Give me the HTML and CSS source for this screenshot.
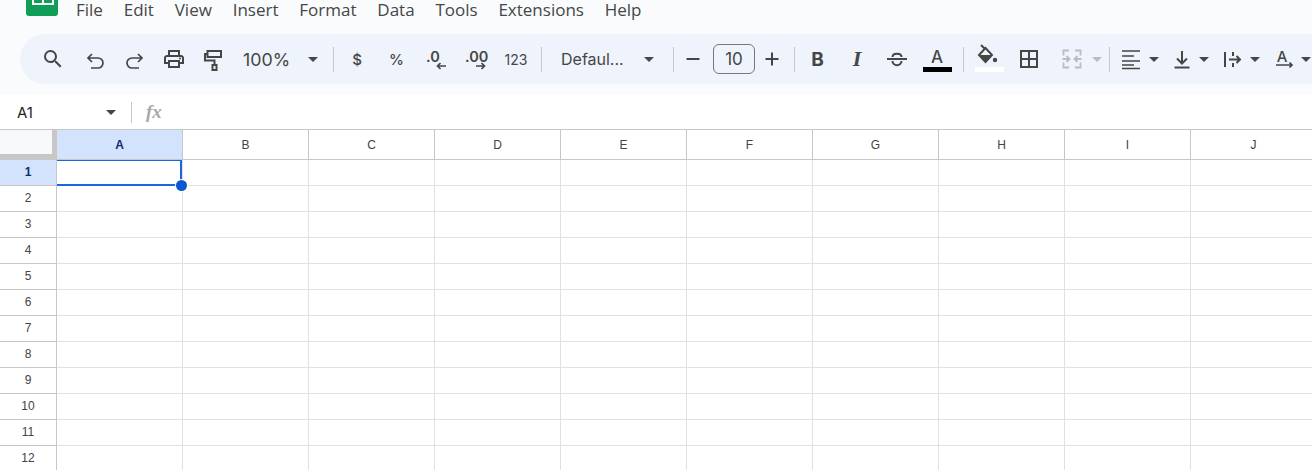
FILE: index.html
```html
<!DOCTYPE html>
<html lang="en">
<head>
<meta charset="utf-8">
<title>Sheet</title>
<link rel="stylesheet" href="styles.css">
</head>
<body>
<div class="top">
  <svg class="logo" width="32" height="16" viewBox="0 0 32 16"><path d="M0 0h32v13a3 3 0 0 1-3 3H3a3 3 0 0 1-3-3z" fill="#0f9d58"/><path d="M6 0h22v5H6z" fill="#fff"/><path d="M8 0h8v3H8zM18 0h8v3h-8z" fill="#0f9d58"/></svg>
  <nav class="menu"><span>File</span><span>Edit</span><span>View</span><span>Insert</span><span>Format</span><span>Data</span><span>Tools</span><span>Extensions</span><span>Help</span></nav>
</div>
<div class="toolbar">
  <button class="btn w-search"><svg width="24" height="24" viewBox="0 0 24 24"><path class="f" d="M15.5 14h-.79l-.28-.27A6.471 6.471 0 0 0 16 9.5 6.5 6.5 0 1 0 9.5 16c1.61 0 3.09-.59 4.23-1.57l.27.28v.79l5 4.99L20.49 19l-4.99-5zm-6 0C7.01 14 5 11.99 5 9.5S7.01 5 9.5 5 14 7.01 14 9.5 11.99 14 9.5 14z"/></svg></button>
  <button class="btn w-undo"><svg width="24" height="24" viewBox="0 0 24 24"><path class="s thin" d="M9 7l-4 4 4 4M5 11h10a5 5 0 0 1 0 10H8"/></svg></button>
  <button class="btn w-redo"><svg width="24" height="24" viewBox="0 0 24 24"><path class="s thin" d="M15 7l4 4-4 4M19 11H9a5 5 0 0 0 0 10h7"/></svg></button>
  <button class="btn w-print"><svg width="24" height="24" viewBox="0 0 24 24"><path class="f" d="M19 8h-1V3H6v5H5c-1.660 0-3 1.340-3 3v6h4v4h12v-4h4v-6c0-1.660-1.340-3-3-3zM8 5h8v3H8V5zm8 12v2H8v-4h8v2zm2-2v-2H6v2H4v-4c0-.55.45-1 1-1h14c.55 0 1 .45 1 1v4h-2z"/><circle class="f" cx="18" cy="11.500" r="1"/></svg></button>
  <button class="btn w-paint"><svg width="24" height="24" viewBox="0 0 24 24"><path class="s" d="M7.500 4h13.500v6H7.500zM7.500 7H5v6.500h9.500V18M12.500 18h4v5h-4z"/></svg></button>
  <span class="txt zoom">100%</span>
  <span class="caret c-zoom"></span>
  <i class="sep s-zoom"></i>
  <span class="txt sym dollar">$</span>
  <span class="txt sym pct">%</span>
  <span class="dec d0"><b>.0</b><svg width="10" height="8" viewBox="0 0 10 8"><path class="s thin" d="M10 4H1.500M4.500 1 1.500 4l3 3"/></svg></span>
  <span class="dec d00"><b>.00</b><svg width="10" height="8" viewBox="0 0 10 8"><path class="s thin" d="M0 4h8.500M5.500 1l3 3-3 3"/></svg></span>
  <span class="txt num">123</span>
  <i class="sep s-num"></i>
  <span class="txt font">Defaul...</span>
  <span class="caret c-font"></span>
  <i class="sep s-font"></i>
  <button class="btn w-minus"><svg width="24" height="24" viewBox="0 0 24 24"><path class="s" d="M5.500 12h13"/></svg></button>
  <span class="size">10</span>
  <button class="btn w-plus"><svg width="24" height="24" viewBox="0 0 24 24"><path class="s" d="M5.500 12h13M12 5.500v13"/></svg></button>
  <i class="sep s-plus"></i>
  <span class="fmt bold">B</span>
  <span class="fmt ital">I</span>
  <button class="btn w-strike"><svg width="24" height="24" viewBox="0 0 24 24"><path class="s" d="M2 12h20M7.500 10c0-4.500 9-4.500 9 0M7.500 14c0 5.500 9 5.500 9 0"/></svg></button>
  <span class="color-a"><span>A</span><i></i></span>
  <i class="sep s-color"></i>
  <span class="fill"><svg width="24" height="20" viewBox="0 0 24 20"><path class="s" d="M4 1l4.500 4.500M8.500 4 15 11 8.500 18 2 11z"/><path class="f" d="M2 11h13l-6.500 7z"/><circle class="f" cx="18" cy="16" r="2.200"/></svg><i></i></span>
  <button class="btn w-border"><svg width="24" height="24" viewBox="0 0 24 24"><path class="f" d="M3 3v18h18V3H3zm8 16H5v-6h6v6zm0-8H5V5h6v6zm8 8h-6v-6h6v6zm0-8h-6V5h6v6z"/></svg></button>
  <button class="btn w-merge"><svg width="24" height="24" viewBox="0 0 24 24"><path class="s dim" d="M9 3.500H3.500v5M3.500 11v2M3.500 15.500v5H9M15 3.500h5.500v5M20.500 11v2M20.500 15.500v5H15M2.500 12H9M6.500 9 9.500 12l-3 3M21.500 12H15M17.500 9l-3 3 3 3"/></svg></button>
  <span class="caret dimc c-merge"></span>
  <i class="sep s-merge"></i>
  <button class="btn w-align"><svg width="24" height="24" viewBox="0 0 24 24"><path class="s lines" d="M3 4h18M3 9h12M3 14h18M3 18h12M3 21.500h18"/></svg></button>
  <span class="caret c-align"></span>
  <button class="btn w-valign"><svg width="24" height="24" viewBox="0 0 24 24"><path class="s" d="M4.500 20.500h15M12 4v12M7 11.500l5 5 5-5"/></svg></button>
  <span class="caret c-valign"></span>
  <button class="btn w-wrap"><svg width="24" height="24" viewBox="0 0 24 24"><path class="s" d="M5 5v15M9 12.500h11M16.500 9l3.500 3.500-3.500 3.500M13 5v4M13 16v4"/></svg></button>
  <span class="caret c-wrap"></span>
  <button class="btn w-rot"><svg width="24" height="24" viewBox="0 0 24 24"><text class="rot-a" x="10" y="15" text-anchor="middle">A</text><path class="s thin" d="M4 18h16M17.500 15.500l2.500 2.500-2.500 2.500"/></svg></button>
  <span class="caret c-rot"></span>
</div>
<div class="formula">
  <span class="name">A1</span>
  <span class="caret c-name"></span>
  <i class="sep s-name"></i>
  <span class="fx">fx</span>
</div>
<div class="sheet">
  <div class="row head">
    <div class="corner"></div>
    <div class="col sel">A</div><div class="col">B</div><div class="col">C</div><div class="col">D</div><div class="col">E</div><div class="col">F</div><div class="col">G</div><div class="col">H</div><div class="col">I</div><div class="col">J</div>
  </div>
  <div class="row"><div class="rh sel">1</div><div class="c"></div><div class="c"></div><div class="c"></div><div class="c"></div><div class="c"></div><div class="c"></div><div class="c"></div><div class="c"></div><div class="c"></div><div class="c"></div></div>
  <div class="row"><div class="rh">2</div><div class="c"></div><div class="c"></div><div class="c"></div><div class="c"></div><div class="c"></div><div class="c"></div><div class="c"></div><div class="c"></div><div class="c"></div><div class="c"></div></div>
  <div class="row"><div class="rh">3</div><div class="c"></div><div class="c"></div><div class="c"></div><div class="c"></div><div class="c"></div><div class="c"></div><div class="c"></div><div class="c"></div><div class="c"></div><div class="c"></div></div>
  <div class="row"><div class="rh">4</div><div class="c"></div><div class="c"></div><div class="c"></div><div class="c"></div><div class="c"></div><div class="c"></div><div class="c"></div><div class="c"></div><div class="c"></div><div class="c"></div></div>
  <div class="row"><div class="rh">5</div><div class="c"></div><div class="c"></div><div class="c"></div><div class="c"></div><div class="c"></div><div class="c"></div><div class="c"></div><div class="c"></div><div class="c"></div><div class="c"></div></div>
  <div class="row"><div class="rh">6</div><div class="c"></div><div class="c"></div><div class="c"></div><div class="c"></div><div class="c"></div><div class="c"></div><div class="c"></div><div class="c"></div><div class="c"></div><div class="c"></div></div>
  <div class="row"><div class="rh">7</div><div class="c"></div><div class="c"></div><div class="c"></div><div class="c"></div><div class="c"></div><div class="c"></div><div class="c"></div><div class="c"></div><div class="c"></div><div class="c"></div></div>
  <div class="row"><div class="rh">8</div><div class="c"></div><div class="c"></div><div class="c"></div><div class="c"></div><div class="c"></div><div class="c"></div><div class="c"></div><div class="c"></div><div class="c"></div><div class="c"></div></div>
  <div class="row"><div class="rh">9</div><div class="c"></div><div class="c"></div><div class="c"></div><div class="c"></div><div class="c"></div><div class="c"></div><div class="c"></div><div class="c"></div><div class="c"></div><div class="c"></div></div>
  <div class="row"><div class="rh">10</div><div class="c"></div><div class="c"></div><div class="c"></div><div class="c"></div><div class="c"></div><div class="c"></div><div class="c"></div><div class="c"></div><div class="c"></div><div class="c"></div></div>
  <div class="row"><div class="rh">11</div><div class="c"></div><div class="c"></div><div class="c"></div><div class="c"></div><div class="c"></div><div class="c"></div><div class="c"></div><div class="c"></div><div class="c"></div><div class="c"></div></div>
  <div class="row"><div class="rh">12</div><div class="c"></div><div class="c"></div><div class="c"></div><div class="c"></div><div class="c"></div><div class="c"></div><div class="c"></div><div class="c"></div><div class="c"></div><div class="c"></div></div>
  <div class="selection"><span class="handle"></span></div>
</div>
</body>
</html>
```
FILE: styles.css
```css
* { box-sizing: border-box; }
html, body { margin: 0; height: 470px; overflow: hidden; }
body { background: #f9fbfd; font-family: "Roboto", "Liberation Sans", sans-serif; color: #1f1f1f; }
i { font-style: normal; }

.top { height: 34px; padding-left: 26px; display: flex; align-items: flex-start; }
.logo { display: block; flex: none; }
.menu { display: flex; gap: 20.800px; margin-left: 18px; font-family: "Open Sans", sans-serif; font-size: 17px; line-height: 20px; color: #444746; }

.toolbar { height: 50px; margin-left: 20px; padding-left: 12px; background: #eff3fb; border-radius: 25px 0 0 25px; display: flex; align-items: center; flex-wrap: nowrap; color: #444746; }
.btn { flex: none; height: 30px; border: 0; padding: 0; background: none; display: flex; align-items: center; justify-content: center; }
.f { fill: #444746; }
.s { fill: none; stroke: #444746; stroke-width: 2; }
.s.thin { stroke-width: 1.700; }
.s.lines { stroke-width: 1.700; }
.s.dim { stroke: #b9bdc1; stroke-width: 1.800; }
.txt { flex: none; white-space: nowrap; }

.w-search { width: 42px; }
.w-undo { width: 42px; }
.w-redo { width: 38px; }
.w-print { width: 40px; }
.w-paint { width: 36px; }
.zoom { margin-left: 13px; width: 55px; font: 17.800px "Inter", sans-serif; }
.caret { flex: none; width: 0; height: 0; border-left: 5px solid transparent; border-right: 5px solid transparent; border-top: 5px solid #444746; }
.c-zoom { margin-left: 10px; }
.sep { flex: none; width: 1px; height: 25px; background: #c7c7c7; }
.s-zoom { margin-left: 15px; }
.sym { width: 40px; text-align: center; font: 500 15px "Inter", sans-serif; }
.dollar { margin-left: 3px; }
.pct { width: 39px; }
.dec { flex: none; width: 40px; display: flex; flex-direction: column; align-items: flex-start; height: 30px; }
.dec b { font: 600 14.500px/25px "Inter", sans-serif; }
.dec svg { display: block; margin-top: -7px; margin-left: 20px; }
.d0 b { margin-left: 10px; }
.d00 b { margin-left: 9px; }
.num { width: 40px; text-align: center; font: 14px "Inter", sans-serif; }
.s-num { margin-left: 5px; }
.font { margin-left: 19px; width: 84px; font: 16px "Inter", sans-serif; }
.c-font { margin-left: -1px; }
.s-font { margin-left: 19px; }
.w-minus { width: 38px; }
.size { flex: none; margin-left: 1px; width: 42px; height: 30px; border: 1px solid #747775; border-radius: 6px; font: 17px/28px "Inter", sans-serif; text-align: center; }
.w-plus { width: 34px; }
.s-plus { margin-left: 5px; }
.fmt { flex: none; width: 40px; text-align: center; font-size: 19px; }
.bold { margin-left: 3px; width: 39px; font-family: "Inter", sans-serif; font-weight: 700; }
.ital { font-family: "Liberation Serif", serif; font-style: italic; font-weight: 700; font-size: 22px; }
.w-strike { width: 40px; }
.color-a { flex: none; width: 40px; height: 30px; display: flex; flex-direction: column; align-items: center; font: 500 17px/26px "Inter", sans-serif; }
.color-a i { width: 29px; height: 5px; background: #000; margin-top: -3px; }
.s-color { margin-left: 6px; }
.fill { flex: none; margin-left: 10px; width: 30px; height: 30px; display: flex; flex-direction: column; align-items: center; }
.fill svg { display: block; }
.fill i { width: 29px; height: 5px; background: #fff; margin-top: 3px; }
.w-border { margin-left: 10px; width: 30px; }
.w-merge { margin-left: 13px; width: 30px; }
.dimc { border-top-color: #b9bdc1; }
.c-merge { margin-left: 5px; }
.s-merge { margin-left: 7px; }
.w-align { margin-left: 9px; width: 24px; }
.c-align { margin-left: 6px; }
.w-valign { margin-left: 11px; width: 24px; }
.c-valign { margin-left: 5px; }
.w-wrap { margin-left: 11px; width: 24px; }
.c-wrap { margin-left: 6px; }
.w-rot { margin-left: 12px; width: 24px; }
.c-rot { margin-left: 5px; }
.rot-a { font: 500 15px "Inter", sans-serif; fill: #444746; }

.formula { margin-top: 11px; height: 35px; background: #fff; border-bottom: 1px solid #c7c7c7; padding-left: 17px; display: flex; align-items: center; }
.name { width: 89px; font: 15px "Inter", sans-serif; color: #1f1f1f; }
.s-name { margin-left: 15px; height: 21px; }
.fx { margin-left: 14px; font: italic 700 19px "Liberation Serif", serif; color: #a9a9a9; }

.sheet { position: relative; background: #fff; font: 12px "Liberation Sans", sans-serif; color: #444; }
.row { display: flex; height: 26px; }
.row.head { height: 30px; }
.corner { flex: none; width: 57px; background: #f8f9fa; border-right: 5px solid #c7c7c7; border-bottom: 6px solid #c7c7c7; }
.col { flex: none; width: 126px; display: flex; align-items: center; justify-content: center; border-right: 1px solid #c7c7c7; border-bottom: 1px solid #c7c7c7; }
.col.sel { background: #d3e3fd; color: #0b2f66; font-weight: 700; }
.rh { flex: none; width: 57px; padding-bottom: 2px; display: flex; align-items: center; justify-content: center; border-right: 1px solid #c7c7c7; border-bottom: 1px solid #c7c7c7; }
.rh.sel { background: #d3e3fd; color: #0b2f66; font-weight: 700; }
.c { flex: none; width: 126px; border-right: 1px solid #e1e1e1; border-bottom: 1px solid #e1e1e1; }
.selection { position: absolute; left: 57px; top: 30px; width: 125px; height: 26px; border: 2px solid #1a68e0; border-left: 0; border-top-width: 1px; }
.handle { position: absolute; right: -7px; bottom: -7px; width: 11px; height: 11px; border-radius: 50%; background: #0b57d0; box-shadow: 0 0 0 1px #fff; }
```
